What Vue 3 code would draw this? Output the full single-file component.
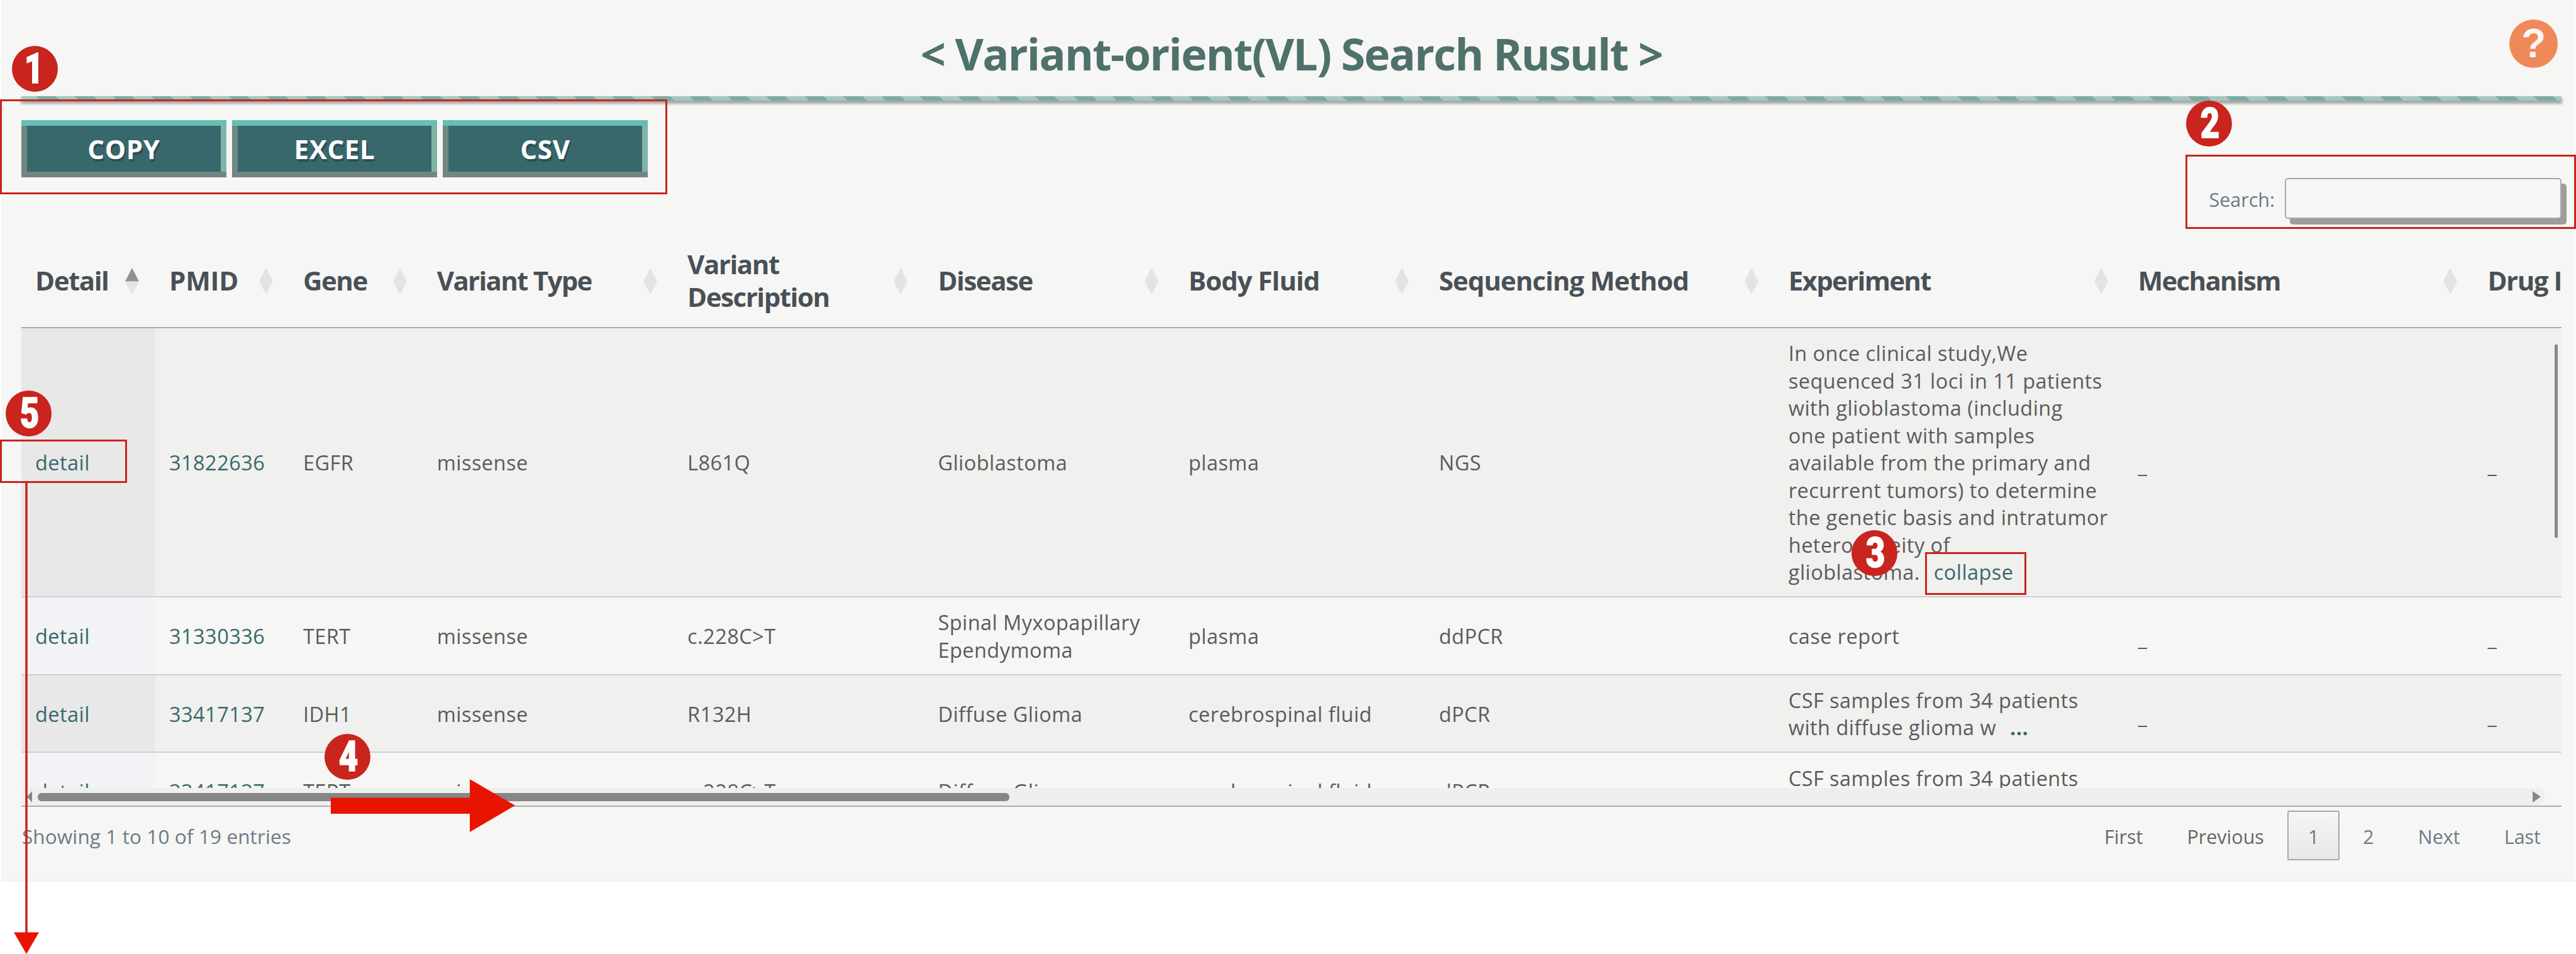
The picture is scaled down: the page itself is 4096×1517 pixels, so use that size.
<script setup>
const columns = [
  { label: ['Detail'], sorted: true },
  { label: ['PMID'], spacing: -0.2 },
  { label: ['Gene'] },
  { label: ['Variant Type'], spacing: -1.7 },
  { label: ['Variant', 'Description'] },
  { label: ['Disease'] },
  { label: ['Body Fluid'], spacing: -1 },
  { label: ['Sequencing Method'], spacing: -1 },
  { label: ['Experiment'], spacing: -1.7 },
  { label: ['Mechanism'], spacing: -1.7 },
  { label: ['Drug Information'] },
]
const rows = [
  {
    cells: ['EGFR', 'missense', 'L861Q', ['Glioblastoma'], 'plasma', 'NGS'],
    pmid: '31822636',
    experiment: ['In once clinical study,We', 'sequenced 31 loci in 11 patients', 'with glioblastoma (including', 'one patient with samples', 'available from the primary and', 'recurrent tumors) to determine', 'the genetic basis and intratumor', 'heterogeneity of', 'glioblastoma.'],
    toggle: 'collapse',
  },
  {
    cells: ['TERT', 'missense', 'c.228C>T', ['Spinal Myxopapillary', 'Ependymoma'], 'plasma', 'ddPCR'],
    pmid: '31330336',
    experiment: ['case report'],
  },
  {
    cells: ['IDH1', 'missense', 'R132H', ['Diffuse Glioma'], 'cerebrospinal fluid', 'dPCR'],
    pmid: '33417137',
    experiment: ['CSF samples from 34 patients', 'with diffuse glioma w'],
    toggle: '...',
  },
  {
    cells: ['TERT', 'missense', 'c.228C>T', ['Diffuse Glioma'], 'cerebrospinal fluid', 'dPCR'],
    pmid: '33417137',
    experiment: ['CSF samples from 34 patients', 'with diffuse glioma w'],
    toggle: '...',
  },
]
const asLines = (v) => (Array.isArray(v) ? v : [v])
</script>

<template>
  <div class="page">
    <main class="panel">
      <header class="head">
        <h1 class="title">&lt; Variant-orient(VL) Search Rusult &gt;</h1>
        <div class="help">?</div>
      </header>
      <div class="rule"></div>
      <div class="buttons">
        <button class="btn">COPY</button>
        <button class="btn">EXCEL</button>
        <button class="btn">CSV</button>
      </div>
      <label class="search"><span>Search:</span><input class="field" type="text" /></label>

      <section class="table">
        <div class="row thead">
          <div v-for="c in columns" :key="c.label[0]" class="th" :style="{ letterSpacing: (c.spacing ?? -1.45) + 'px' }">
            <span class="label"><span v-for="l in c.label" :key="l" class="line">{{ l }}</span></span>
            <svg class="sort" viewBox="0 0 22 42">
              <path d="M11 0L22 21.5H0Z" :fill="c.sorted ? '#8f9293' : '#e3e3e3'" />
              <path d="M0 21.5H22L11 42Z" fill="#e3e3e3" />
            </svg>
          </div>
        </div>
        <div class="tbody">
          <div v-for="(r, i) in rows" :key="i" class="row tr">
            <div class="td first"><a class="link">detail</a></div>
            <div class="td"><a class="link">{{ r.pmid }}</a></div>
            <div v-for="(c, j) in r.cells" :key="j" class="td">
              <span v-for="l in asLines(c)" :key="l" class="line">{{ l }}</span>
            </div>
            <div class="td">
              <span v-for="(l, k) in r.experiment" :key="k" class="line">{{ l }}<a v-if="r.toggle && k === r.experiment.length - 1" class="link toggle" :class="{ dots: r.toggle === '...' }">{{ r.toggle }}</a></span>
            </div>
            <div class="td dash">_</div>
            <div class="td dash">_</div>
          </div>
          <div class="vbar"></div>
        </div>
        <div class="hbar">
          <svg class="tip" viewBox="0 0 8 18"><path d="M8 0V18L0 9Z" /></svg>
          <div class="thumb"></div>
          <svg class="tip end" viewBox="0 0 13 18"><path d="M0 0V18L13 9Z" /></svg>
        </div>
      </section>

      <footer class="foot">
        <span class="info">Showing 1 to 10 of 19 entries</span>
        <nav class="pages">
          <a class="pg off">First</a>
          <a class="pg off">Previous</a>
          <a class="pg current">1</a>
          <a class="pg">2</a>
          <a class="pg">Next</a>
          <a class="pg">Last</a>
        </nav>
      </footer>
    </main>

    <div class="mark m1"></div>
    <div class="mark m2"></div>
    <div class="mark m3"></div>
    <div class="mark m5"></div>
    <div class="num n1"><span>1</span></div>
    <div class="num n2"><span>2</span></div>
    <div class="num n3"><span>3</span></div>
    <div class="num n4"><span>4</span></div>
    <div class="num n5"><span>5</span></div>
    <svg class="right-arrow" viewBox="0 0 293 84"><path d="M0 29.5H221V0L293 41.8L221 84V55H0Z" /></svg>
    <svg class="down-arrow" viewBox="0 0 40 749"><path d="M18.2 0H21.8V715H18.2Z" fill="#c9241e" /><path d="M0 714.5H40L20 749Z" fill="#e81400" /></svg>
  </div>
</template>

<style>
body { background: #fff; }
</style>

<style scoped>
.page { position: relative; width: 4096px; height: 1517px; overflow: hidden; background: #fff; font-family: "Open Sans", "Noto Sans", sans-serif; font-size: 32.5px; line-height: 43.45px; color: #5a5b5e; }
.page * { box-sizing: border-box; }
.panel { margin: 0 1px 0 2px; padding: 1px 22px 0 32px; height: 1402px; background: #f6f6f4; border-bottom: 3px solid #f3f3f5; display: flex; flex-direction: column; }
.head { height: 152px; display: grid; grid-template-columns: 1fr auto 1fr; align-items: start; flex: none; }
.title { grid-column: 2; margin: 36px 0 0; font-size: 70px; line-height: 96px; font-weight: 700; letter-spacing: -1.75px; color: #4f716b; white-space: pre; }
.help { justify-self: end; margin: 30px 6px 0 0; width: 77px; height: 77px; border-radius: 50%; background: #f0895a; color: #f8f7f4; font: 700 64px/77px "Liberation Sans", sans-serif; text-align: center; }
.rule { flex: none; height: 7px; background: repeating-linear-gradient(45deg, #a5c7c1 0 21.6px, #7aada4 21.6px 43.2px); box-shadow: 0 4px 4px 1px rgba(0, 0, 0, .33); }
.buttons { display: flex; gap: 9px; margin-top: 31px; flex: none; }
.btn { width: 326px; height: 91px; border: 0; padding: 0; background: #38686b; box-shadow: inset 0 9px #66bfb1, inset 0 -9px #708782, inset -9px 0 #7fb3a8, inset 9px 0 #708782; color: #fff; font: 700 42px/91px "Open Sans", sans-serif; letter-spacing: .7px; text-shadow: 2px 4px 0 #2b4f52; }
.search { display: flex; justify-content: flex-end; align-items: center; height: 65px; margin-top: 1px; gap: 16px; color: #6c7a89; font-size: 30.5px; flex: none; }
.search span { padding-top: 4px; }
.field { width: 440px; height: 65px; border: 2px solid #a8a8a8; border-radius: 5px; background: #f6f6f4; box-shadow: 8px 9px 0 #9d9d9d; }
.table { margin-top: 22px; width: 4039px; overflow: hidden; border-bottom: 2px solid #acacaa; flex: none; }
.row { display: grid; grid-template-columns: 213px 213px 212.8px 398.3px 398.3px 398.3px 398.3px 555.8px 555.8px 555.8px 555.8px; width: 4456px; }
.thead { height: 152px; border-bottom: 2px solid #acacaa; }
.th { display: flex; align-items: center; justify-content: space-between; padding: 2px 26px 0 22px; font-size: 42px; line-height: 52px; font-weight: 700; color: #495057; white-space: nowrap; }
.line { display: block; white-space: nowrap; }
.sort { width: 22px; height: 42px; flex: none; margin-top: 1px; }
.tbody { position: relative; height: 731px; overflow: hidden; }
.tr { border-bottom: 2px solid #cfcfcd; letter-spacing: .45px; }
.td { padding: 18.4px 22px 16.4px; display: flex; flex-direction: column; justify-content: center; align-items: flex-start; }
.td.dash { padding-top: 25px; }
.tr:nth-child(odd) { background: #f0f0ee; }
.tr:nth-child(odd) .first { background: #e8e8e8; }
.tr:nth-child(even) .first { background: #f1f3f6; }
.link { color: #38696c; }
.toggle { margin-left: 22px; }
.dots { font-weight: 700; }
.vbar { position: absolute; left: 4028px; top: 26px; width: 5px; height: 307px; background: #888; }
.hbar { display: flex; align-items: center; width: 4012px; height: 28px; background: #efefef; border-radius: 0 12px 12px 0; padding-left: 9px; }
.thumb { width: 1545px; height: 13px; border-radius: 6px; background: #868686; margin-left: 9px; }
.tip { width: 8px; height: 18px; fill: #868686; }
.tip.end { width: 13px; margin: 0 6px 0 auto; }
.foot { display: flex; justify-content: space-between; align-items: flex-start; padding-top: 6px; color: #6c7a89; font-size: 30.5px; }
.info { margin-top: 19px; padding-left: 1px; font-size: 31.5px; letter-spacing: .1px; }
.pages { display: flex; gap: 4px; }
.pg { height: 79px; line-height: 78px; padding: 0 31px; border: 2px solid transparent; border-radius: 3px; }
.off { color: #666; }
.current { border-color: #a8a8a8; background: linear-gradient(#f5f5f5, #e8e8e8); }
.mark { position: absolute; border: 3px solid #c9241e; }
.m1 { left: 0; top: 158px; width: 1061px; height: 151px; }
.m2 { left: 3475px; top: 246px; width: 621px; height: 118px; }
.m3 { left: 3061px; top: 878px; width: 161px; height: 68px; }
.m5 { left: 0; top: 699px; width: 202px; height: 69px; }
.num { position: absolute; width: 73px; height: 73px; border-radius: 50%; background: #c9241e; color: #fff; font: 900 66px/73px Roboto, sans-serif; text-align: center; }
.num span { display: inline-block; transform: translateX(2px) scaleX(.8); -webkit-text-stroke: 1.5px #fff; }
.n1 { left: 19px; top: 73px; }
.n1 span { transform: translateX(-1px) scaleX(.8); }
.n2 { left: 3476px; top: 160px; }
.n3 { left: 2944px; top: 843px; }
.n4 { left: 516px; top: 1167px; }
.n5 { left: 9px; top: 621px; }
.right-arrow { position: absolute; left: 526px; top: 1239px; width: 293px; height: 84px; fill: #e81400; }
.down-arrow { position: absolute; left: 22px; top: 768px; width: 40px; height: 749px; }
</style>
